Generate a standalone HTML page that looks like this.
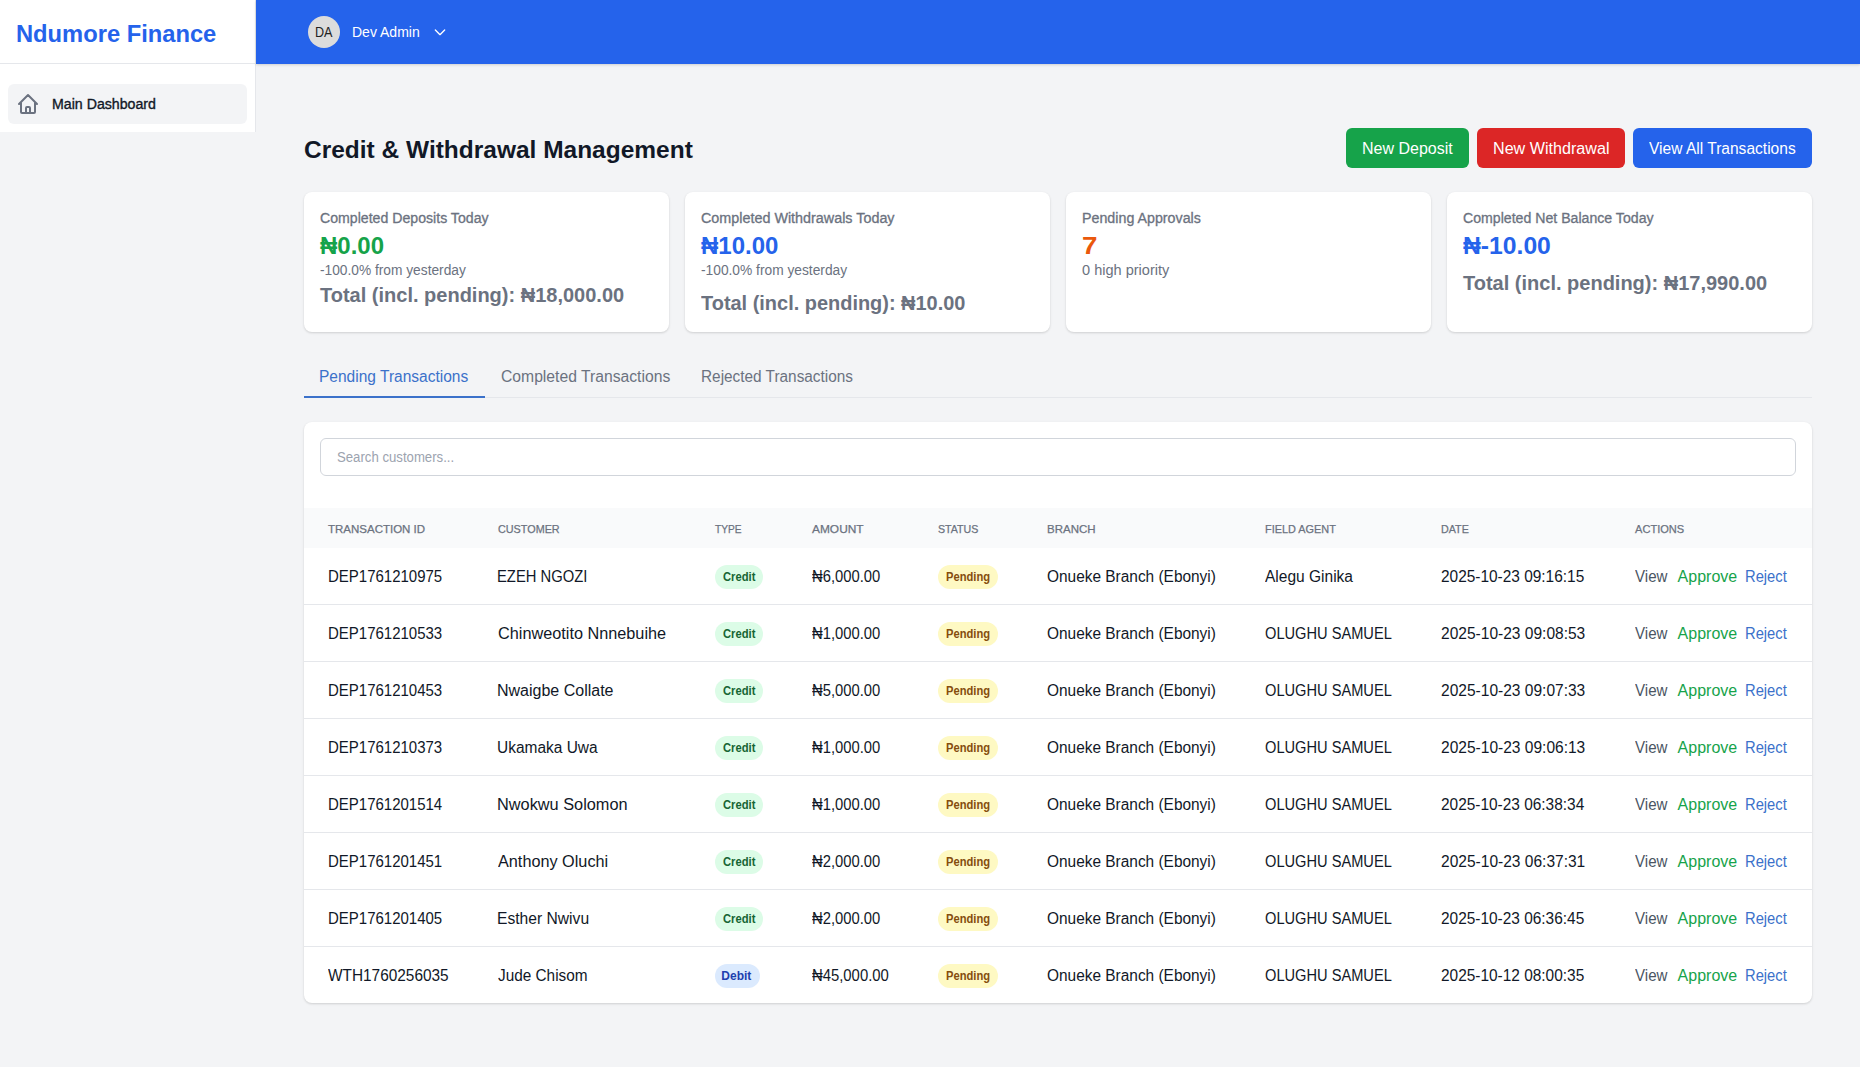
<!DOCTYPE html>
<html lang="en">
<head>
<meta charset="utf-8">
<title>Credit &amp; Withdrawal Management - Ndumore Finance</title>
<style>
*{box-sizing:border-box;margin:0;padding:0}
html,body{width:1860px;height:1067px;overflow:hidden}
body{background:#f3f4f6;font-family:"Liberation Sans",sans-serif;color:#111827;position:relative}
.k{position:relative;display:inline-block;white-space:nowrap;transform-origin:0 50%}
.sidebar{position:absolute;left:0;top:0;width:256px;height:132px;background:#fff;border-right:1px solid #e5e7eb}
.brand{position:absolute;left:0;top:0;width:255px;height:64px;border-bottom:1px solid #e5e7eb;padding:18px 0 0 16px;font-size:24px;line-height:32px;font-weight:700;color:#2563eb;white-space:nowrap}
.nav{position:absolute;left:8px;top:84px;width:239px;height:40px;background:#f3f4f6;border-radius:6px}
.nav svg{position:absolute;left:8px;top:8px;width:24px;height:24px}
.navt{position:absolute;left:44px;top:10px;font-size:14px;line-height:20px;color:#111827;white-space:nowrap;-webkit-text-stroke:.35px #111827}
.topbar{position:absolute;left:256px;top:0;width:1604px;height:64px;background:#2563eb;box-shadow:0 1px 3px rgba(0,0,0,.1),0 1px 2px rgba(0,0,0,.06)}
.avatar{position:absolute;left:52px;top:16px;width:32px;height:32px;border-radius:50%;background:#dcdcdc;color:#222;font-size:14px;line-height:32px;text-align:center;white-space:nowrap}
.avatar .k{transform-origin:50% 50%}
.uname{position:absolute;left:96px;top:22px;font-size:14px;line-height:20px;color:#fff;white-space:nowrap}
.chev{position:absolute;left:176px;top:24px;width:16px;height:16px}
h1{position:absolute;left:304px;top:134px;font-size:24px;line-height:32px;font-weight:700;color:#111827;white-space:nowrap}
.btn{position:absolute;top:128px;height:40px;border-radius:6px;color:#fff;font-size:16px;line-height:42px;text-align:left;padding-left:16px;white-space:nowrap}
.b1{left:1346px;width:123px;background:#16a34a}
.b2{left:1477px;width:148px;background:#dc2626}
.b3{left:1633px;width:179px;background:#2563eb}
.card{position:absolute;top:192px;width:365px;height:140px;background:#fff;border-radius:8px;box-shadow:0 1px 3px rgba(0,0,0,.1),0 1px 2px rgba(0,0,0,.06);padding:16px}
.card p{white-space:nowrap;position:relative}
.card .val{top:2px}.card .tot{top:1px}
.lbl{font-size:14px;line-height:20px;height:20px;color:#6b7280;-webkit-text-stroke:.3px #6b7280}
.val{font-size:24px;line-height:32px;height:32px;font-weight:700}
.sub{font-size:14px;line-height:20px;height:20px;color:#6b7280}
.tot{font-size:20px;line-height:28px;height:28px;font-weight:700;color:#6b7280}
.mt2{margin-top:8px}
.green{color:#16a34a}.blue{color:#2563eb}.orange{color:#ea580c}
.tabs{position:absolute;left:304px;top:356px;width:1508px;height:42px;border-bottom:1px solid #e5e7eb}
.tab{position:absolute;top:0;height:42px;padding:9px 16px 0;font-size:16px;line-height:24px;color:#6b7280;white-space:nowrap}
.tab.on{color:#3b71ca;border-bottom:2px solid #3b71ca}
.panel{position:absolute;left:304px;top:422px;width:1508px;height:581px;background:#fff;border-radius:8px;box-shadow:0 1px 3px rgba(0,0,0,.1),0 1px 2px rgba(0,0,0,.06);overflow:hidden}
.search{position:absolute;left:16px;top:16px;width:1476px;height:38px;border:1px solid #d1d5db;border-radius:6px;padding:8px 16px 8px;font-size:14px;line-height:20px;color:#9ca3af;white-space:nowrap}
table{position:absolute;left:0;top:86px;width:1508px;border-collapse:separate;border-spacing:0;table-layout:fixed}
th{height:40px;background:#f9fafb;text-align:left;padding:1px 0 0 24px;font-size:11.5px;line-height:16px;font-weight:400;color:#6b7280;text-transform:uppercase;white-space:nowrap;-webkit-text-stroke:.25px #6b7280}
td{height:57px;padding:1px 0 0 24px;font-size:16px;line-height:24px;color:#111827;white-space:nowrap;border-top:1px solid #e5e7eb;vertical-align:middle}
tbody tr:first-child td{height:56px;border-top:0}
.pill{display:inline-block;height:24px;padding:4px 8px;border-radius:12px;font-size:12px;line-height:16px;font-weight:700;vertical-align:middle;position:relative;top:0px;white-space:nowrap}
.pc{background:#dcfce7;color:#166534;width:48px;margin-left:1px}
.pd{background:#dbeafe;color:#1e40af;width:45px;margin-left:1px}
.pp{background:#fef9c3;color:#854d0e;width:60px}
.act{position:relative}
.a1{color:#4b5563;width:41px}.a2{color:#16a34a;width:69px}.a3{color:#3b71ca;width:50px}
</style>
</head>
<body>
<div class="sidebar">
  <div class="brand"><span class="k" style="transform:scaleX(0.988);left:0.0px">Ndumore Finance</span></div>
  <div class="nav">
    <svg viewBox="0 0 24 24" fill="none" stroke="#6b7280" stroke-width="2" stroke-linecap="round" stroke-linejoin="round"><path d="M3 12l2-2m0 0l7-7 7 7M5 10v10a1 1 0 001 1h3m10-11l2 2m-2-2v10a1 1 0 01-1 1h-3m-6 0a1 1 0 001-1v-4a1 1 0 011-1h2a1 1 0 011 1v4a1 1 0 001 1m-6 0h6"/></svg>
    <div class="navt"><span class="k" style="transform:scaleX(1.012);left:0.0px">Main Dashboard</span></div>
  </div>
</div>
<div class="topbar">
  <div class="avatar"><span class="k" style="transform:scaleX(0.900);left:0.0px">DA</span></div>
  <div class="uname"><span class="k" style="transform:scaleX(1.000);left:0.0px">Dev Admin</span></div>
  <svg class="chev" viewBox="0 0 24 24" fill="none" stroke="#fff" stroke-width="2" stroke-linecap="round" stroke-linejoin="round"><path d="M19 9l-7 7-7-7"/></svg>
</div>
<h1><span class="k" style="transform:scaleX(1.020);left:0.0px">Credit &amp; Withdrawal Management</span></h1>
<div class="btn b1"><span class="k" style="transform:scaleX(1.000);left:0.0px">New Deposit</span></div>
<div class="btn b2"><span class="k" style="transform:scaleX(1.008);left:0.0px">New Withdrawal</span></div>
<div class="btn b3"><span class="k" style="transform:scaleX(0.972);left:0.0px">View All Transactions</span></div>
<div class="card" style="left:304px">
  <p class="lbl"><span class="k" style="transform:scaleX(1.009);left:0.0px">Completed Deposits Today</span></p>
  <p class="val green"><span class="k" style="transform:scaleX(1.000);left:0.0px">₦0.00</span></p>
  <p class="sub"><span class="k" style="transform:scaleX(0.981);left:0.0px">-100.0% from yesterday</span></p>
  <p class="tot"><span class="k" style="transform:scaleX(1.000);left:0.0px">Total (incl. pending): ₦18,000.00</span></p>
</div>
<div class="card" style="left:685px">
  <p class="lbl"><span class="k" style="transform:scaleX(1.025);left:0.0px">Completed Withdrawals Today</span></p>
  <p class="val blue"><span class="k" style="transform:scaleX(1.000);left:0.0px">₦10.00</span></p>
  <p class="sub"><span class="k" style="transform:scaleX(0.983);left:0.0px">-100.0% from yesterday</span></p>
  <p class="tot mt2"><span class="k" style="transform:scaleX(0.997);left:0.0px">Total (incl. pending): ₦10.00</span></p>
</div>
<div class="card" style="left:1066px">
  <p class="lbl"><span class="k" style="transform:scaleX(1.018);left:0.0px">Pending Approvals</span></p>
  <p class="val orange"><span class="k" style="transform:scaleX(1.156);left:0.0px">7</span></p>
  <p class="sub"><span class="k" style="transform:scaleX(1.039);left:0.0px">0 high priority</span></p>
</div>
<div class="card" style="left:1447px">
  <p class="lbl"><span class="k" style="transform:scaleX(1.009);left:0.0px">Completed Net Balance Today</span></p>
  <p class="val blue"><span class="k" style="transform:scaleX(1.029);left:0.0px">₦-10.00</span></p>
  <p class="tot mt2"><span class="k" style="transform:scaleX(1.000);left:0.0px">Total (incl. pending): ₦17,990.00</span></p>
</div>
<div class="tabs">
  <div class="tab on" style="left:0;width:181px"><span class="k" style="transform:scaleX(0.970);left:-0.8px">Pending Transactions</span></div>
  <div class="tab" style="left:181px"><span class="k" style="transform:scaleX(0.981);left:0.0px">Completed Transactions</span></div>
  <div class="tab" style="left:382px"><span class="k" style="transform:scaleX(0.960);left:-1.2px">Rejected Transactions</span></div>
</div>
<div class="panel">
  <div class="search"><span class="k" style="transform:scaleX(0.941);left:0.0px">Search customers...</span></div>
  <table>
    <colgroup><col style="width:170px"><col style="width:216px"><col style="width:98px"><col style="width:126px"><col style="width:109px"><col style="width:218px"><col style="width:176px"><col style="width:194px"><col style="width:201px"></colgroup>
    <thead><tr><th><span class="k" style="transform:scaleX(1.000);left:0.0px">Transaction ID</span></th><th><span class="k" style="transform:scaleX(0.940);left:0.0px">Customer</span></th><th><span class="k" style="transform:scaleX(0.883);left:1.0px">Type</span></th><th><span class="k" style="transform:scaleX(1.036);left:0.0px">Amount</span></th><th><span class="k" style="transform:scaleX(0.925);left:0.0px">Status</span></th><th><span class="k" style="transform:scaleX(1.000);left:0.0px">Branch</span></th><th><span class="k" style="transform:scaleX(0.947);left:0.0px">Field Agent</span></th><th><span class="k" style="transform:scaleX(0.933);left:0.0px">Date</span></th><th><span class="k" style="transform:scaleX(0.963);left:0.0px">Actions</span></th></tr></thead>
    <tbody>
      <tr><td><span class="k" style="transform:scaleX(0.937);left:0.0px">DEP1761210975</span></td><td><span class="k" style="transform:scaleX(0.924);left:-1.0px">EZEH NGOZI</span></td><td><span class="pill pc"><span class="k" style="transform:scaleX(0.934);left:0.0px">Credit</span></span></td><td><span class="k" style="transform:scaleX(0.924);left:0.0px">₦6,000.00</span></td><td><span class="pill pp"><span class="k" style="transform:scaleX(0.930);left:0.0px">Pending</span></span></td><td><span class="k" style="transform:scaleX(0.964);left:0.0px">Onueke Branch (Ebonyi)</span></td><td><span class="k" style="transform:scaleX(0.970);left:0.0px">Alegu Ginika</span></td><td><span class="k" style="transform:scaleX(0.964);left:0.0px">2025-10-23 09:16:15</span></td><td class="act"><span class="k a1" style="transform:scaleX(0.943);left:0.0px">View</span><span class="k a2" style="transform:scaleX(1.000);left:1.6px">Approve</span><span class="k a3" style="transform:scaleX(0.920);left:0.0px">Reject</span></td></tr>
      <tr><td><span class="k" style="transform:scaleX(0.937);left:0.0px">DEP1761210533</span></td><td><span class="k" style="transform:scaleX(1.016);left:0.0px">Chinweotito Nnnebuihe</span></td><td><span class="pill pc"><span class="k" style="transform:scaleX(0.934);left:0.0px">Credit</span></span></td><td><span class="k" style="transform:scaleX(0.924);left:0.0px">₦1,000.00</span></td><td><span class="pill pp"><span class="k" style="transform:scaleX(0.930);left:0.0px">Pending</span></span></td><td><span class="k" style="transform:scaleX(0.964);left:0.0px">Onueke Branch (Ebonyi)</span></td><td><span class="k" style="transform:scaleX(0.914);left:0.0px">OLUGHU SAMUEL</span></td><td><span class="k" style="transform:scaleX(0.971);left:0.0px">2025-10-23 09:08:53</span></td><td class="act"><span class="k a1" style="transform:scaleX(0.943);left:0.0px">View</span><span class="k a2" style="transform:scaleX(1.000);left:1.6px">Approve</span><span class="k a3" style="transform:scaleX(0.920);left:0.0px">Reject</span></td></tr>
      <tr><td><span class="k" style="transform:scaleX(0.937);left:0.0px">DEP1761210453</span></td><td><span class="k" style="transform:scaleX(1.000);left:-1.0px">Nwaigbe Collate</span></td><td><span class="pill pc"><span class="k" style="transform:scaleX(0.934);left:0.0px">Credit</span></span></td><td><span class="k" style="transform:scaleX(0.924);left:0.0px">₦5,000.00</span></td><td><span class="pill pp"><span class="k" style="transform:scaleX(0.930);left:0.0px">Pending</span></span></td><td><span class="k" style="transform:scaleX(0.964);left:0.0px">Onueke Branch (Ebonyi)</span></td><td><span class="k" style="transform:scaleX(0.914);left:0.0px">OLUGHU SAMUEL</span></td><td><span class="k" style="transform:scaleX(0.971);left:0.0px">2025-10-23 09:07:33</span></td><td class="act"><span class="k a1" style="transform:scaleX(0.943);left:0.0px">View</span><span class="k a2" style="transform:scaleX(1.000);left:1.6px">Approve</span><span class="k a3" style="transform:scaleX(0.920);left:0.0px">Reject</span></td></tr>
      <tr><td><span class="k" style="transform:scaleX(0.937);left:0.0px">DEP1761210373</span></td><td><span class="k" style="transform:scaleX(0.967);left:-1.0px">Ukamaka Uwa</span></td><td><span class="pill pc"><span class="k" style="transform:scaleX(0.934);left:0.0px">Credit</span></span></td><td><span class="k" style="transform:scaleX(0.924);left:0.0px">₦1,000.00</span></td><td><span class="pill pp"><span class="k" style="transform:scaleX(0.930);left:0.0px">Pending</span></span></td><td><span class="k" style="transform:scaleX(0.964);left:0.0px">Onueke Branch (Ebonyi)</span></td><td><span class="k" style="transform:scaleX(0.914);left:0.0px">OLUGHU SAMUEL</span></td><td><span class="k" style="transform:scaleX(0.971);left:0.0px">2025-10-23 09:06:13</span></td><td class="act"><span class="k a1" style="transform:scaleX(0.943);left:0.0px">View</span><span class="k a2" style="transform:scaleX(1.000);left:1.6px">Approve</span><span class="k a3" style="transform:scaleX(0.920);left:0.0px">Reject</span></td></tr>
      <tr><td><span class="k" style="transform:scaleX(0.937);left:0.0px">DEP1761201514</span></td><td><span class="k" style="transform:scaleX(1.020);left:-1.0px">Nwokwu Solomon</span></td><td><span class="pill pc"><span class="k" style="transform:scaleX(0.934);left:0.0px">Credit</span></span></td><td><span class="k" style="transform:scaleX(0.924);left:0.0px">₦1,000.00</span></td><td><span class="pill pp"><span class="k" style="transform:scaleX(0.930);left:0.0px">Pending</span></span></td><td><span class="k" style="transform:scaleX(0.964);left:0.0px">Onueke Branch (Ebonyi)</span></td><td><span class="k" style="transform:scaleX(0.914);left:0.0px">OLUGHU SAMUEL</span></td><td><span class="k" style="transform:scaleX(0.964);left:0.0px">2025-10-23 06:38:34</span></td><td class="act"><span class="k a1" style="transform:scaleX(0.943);left:0.0px">View</span><span class="k a2" style="transform:scaleX(1.000);left:1.6px">Approve</span><span class="k a3" style="transform:scaleX(0.920);left:0.0px">Reject</span></td></tr>
      <tr><td><span class="k" style="transform:scaleX(0.937);left:0.0px">DEP1761201451</span></td><td><span class="k" style="transform:scaleX(1.015);left:0.0px">Anthony Oluchi</span></td><td><span class="pill pc"><span class="k" style="transform:scaleX(0.934);left:0.0px">Credit</span></span></td><td><span class="k" style="transform:scaleX(0.924);left:0.0px">₦2,000.00</span></td><td><span class="pill pp"><span class="k" style="transform:scaleX(0.930);left:0.0px">Pending</span></span></td><td><span class="k" style="transform:scaleX(0.964);left:0.0px">Onueke Branch (Ebonyi)</span></td><td><span class="k" style="transform:scaleX(0.914);left:0.0px">OLUGHU SAMUEL</span></td><td><span class="k" style="transform:scaleX(0.971);left:0.0px">2025-10-23 06:37:31</span></td><td class="act"><span class="k a1" style="transform:scaleX(0.943);left:0.0px">View</span><span class="k a2" style="transform:scaleX(1.000);left:1.6px">Approve</span><span class="k a3" style="transform:scaleX(0.920);left:0.0px">Reject</span></td></tr>
      <tr><td><span class="k" style="transform:scaleX(0.937);left:0.0px">DEP1761201405</span></td><td><span class="k" style="transform:scaleX(0.977);left:-1.0px">Esther Nwivu</span></td><td><span class="pill pc"><span class="k" style="transform:scaleX(0.934);left:0.0px">Credit</span></span></td><td><span class="k" style="transform:scaleX(0.924);left:0.0px">₦2,000.00</span></td><td><span class="pill pp"><span class="k" style="transform:scaleX(0.930);left:0.0px">Pending</span></span></td><td><span class="k" style="transform:scaleX(0.964);left:0.0px">Onueke Branch (Ebonyi)</span></td><td><span class="k" style="transform:scaleX(0.914);left:0.0px">OLUGHU SAMUEL</span></td><td><span class="k" style="transform:scaleX(0.964);left:0.0px">2025-10-23 06:36:45</span></td><td class="act"><span class="k a1" style="transform:scaleX(0.943);left:0.0px">View</span><span class="k a2" style="transform:scaleX(1.000);left:1.6px">Approve</span><span class="k a3" style="transform:scaleX(0.920);left:0.0px">Reject</span></td></tr>
      <tr><td><span class="k" style="transform:scaleX(0.962);left:0.0px">WTH1760256035</span></td><td><span class="k" style="transform:scaleX(0.959);left:0.0px">Jude Chisom</span></td><td><span class="pill pd"><span class="k" style="transform:scaleX(1.000);left:-1.7px">Debit</span></span></td><td><span class="k" style="transform:scaleX(0.928);left:0.0px">₦45,000.00</span></td><td><span class="pill pp"><span class="k" style="transform:scaleX(0.930);left:0.0px">Pending</span></span></td><td><span class="k" style="transform:scaleX(0.964);left:0.0px">Onueke Branch (Ebonyi)</span></td><td><span class="k" style="transform:scaleX(0.914);left:0.0px">OLUGHU SAMUEL</span></td><td><span class="k" style="transform:scaleX(0.964);left:0.0px">2025-10-12 08:00:35</span></td><td class="act"><span class="k a1" style="transform:scaleX(0.943);left:0.0px">View</span><span class="k a2" style="transform:scaleX(1.000);left:1.6px">Approve</span><span class="k a3" style="transform:scaleX(0.920);left:0.0px">Reject</span></td></tr>
    </tbody>
  </table>
</div>
</body>
</html>
